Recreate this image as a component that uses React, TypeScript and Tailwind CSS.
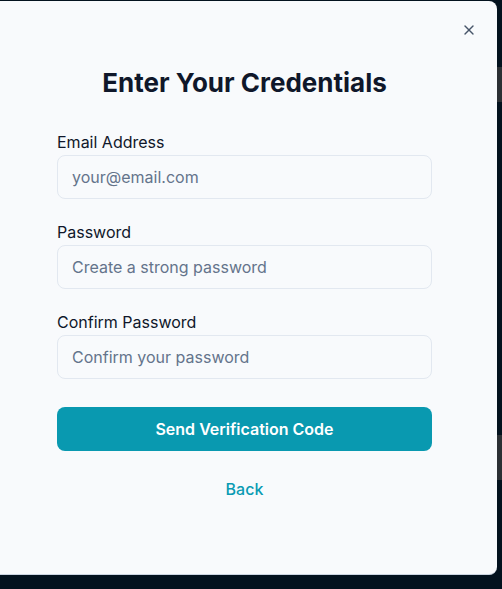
import { X } from 'lucide-react';

const fields = [
  { label: 'Email Address', placeholder: 'your@email.com', type: 'email' },
  { label: 'Password', placeholder: 'Create a strong password', type: 'password' },
  { label: 'Confirm Password', placeholder: 'Confirm your password', type: 'password' },
];

export default function App() {
  return (
    <div
      className="w-[502px] h-[589px] bg-[#03121e] flex flex-row items-start overflow-hidden"
      style={{ fontFamily: 'Inter, "Noto Sans", sans-serif' }}
    >
      {/* Dialog */}
      <div className="relative mt-[1px] w-[497px] h-[574px] shrink-0 bg-[#f8fafc] rounded-r-lg border-b border-[#cbd5e1] flex flex-col pl-[57px] pr-[65px] pt-[66px]">
        <button className="absolute top-[21px] right-[20px] text-[#475569]">
          <X size={16} strokeWidth={2} />
        </button>

        <h2 className="text-[26px] leading-8 font-bold text-[#0f172a] text-center">
          Enter Your Credentials
        </h2>

        <form className="mt-[31px] flex flex-col gap-[21px]">
          {fields.map((f) => (
            <div key={f.label} className="flex flex-col gap-[1px]">
              <label className="text-base leading-6 font-normal text-[#0f172a]">{f.label}</label>
              <input
                type={f.type}
                placeholder={f.placeholder}
                className="h-11 w-full rounded-lg border border-[#e2e8f0] bg-[#f8fafc] px-3.5 text-base text-[#0f172a] placeholder:text-[#64748b] outline-none"
              />
            </div>
          ))}
        </form>

        <button className="mt-[28px] h-11 w-full rounded-lg bg-[#0999b0] text-white text-base font-semibold">
          Send Verification Code
        </button>

        <button className="mt-[26px] self-center text-base leading-6 font-medium text-[#0a9bb3]">
          Back
        </button>
      </div>

      {/* page behind overlay */}
      <div className="w-[5px] flex flex-col">
        <div className="mt-[67px] h-[35px] bg-[#2b3034]" />
        <div className="mt-[333px] h-[45px] bg-[#2b3034]" />
      </div>
    </div>
  );
}
